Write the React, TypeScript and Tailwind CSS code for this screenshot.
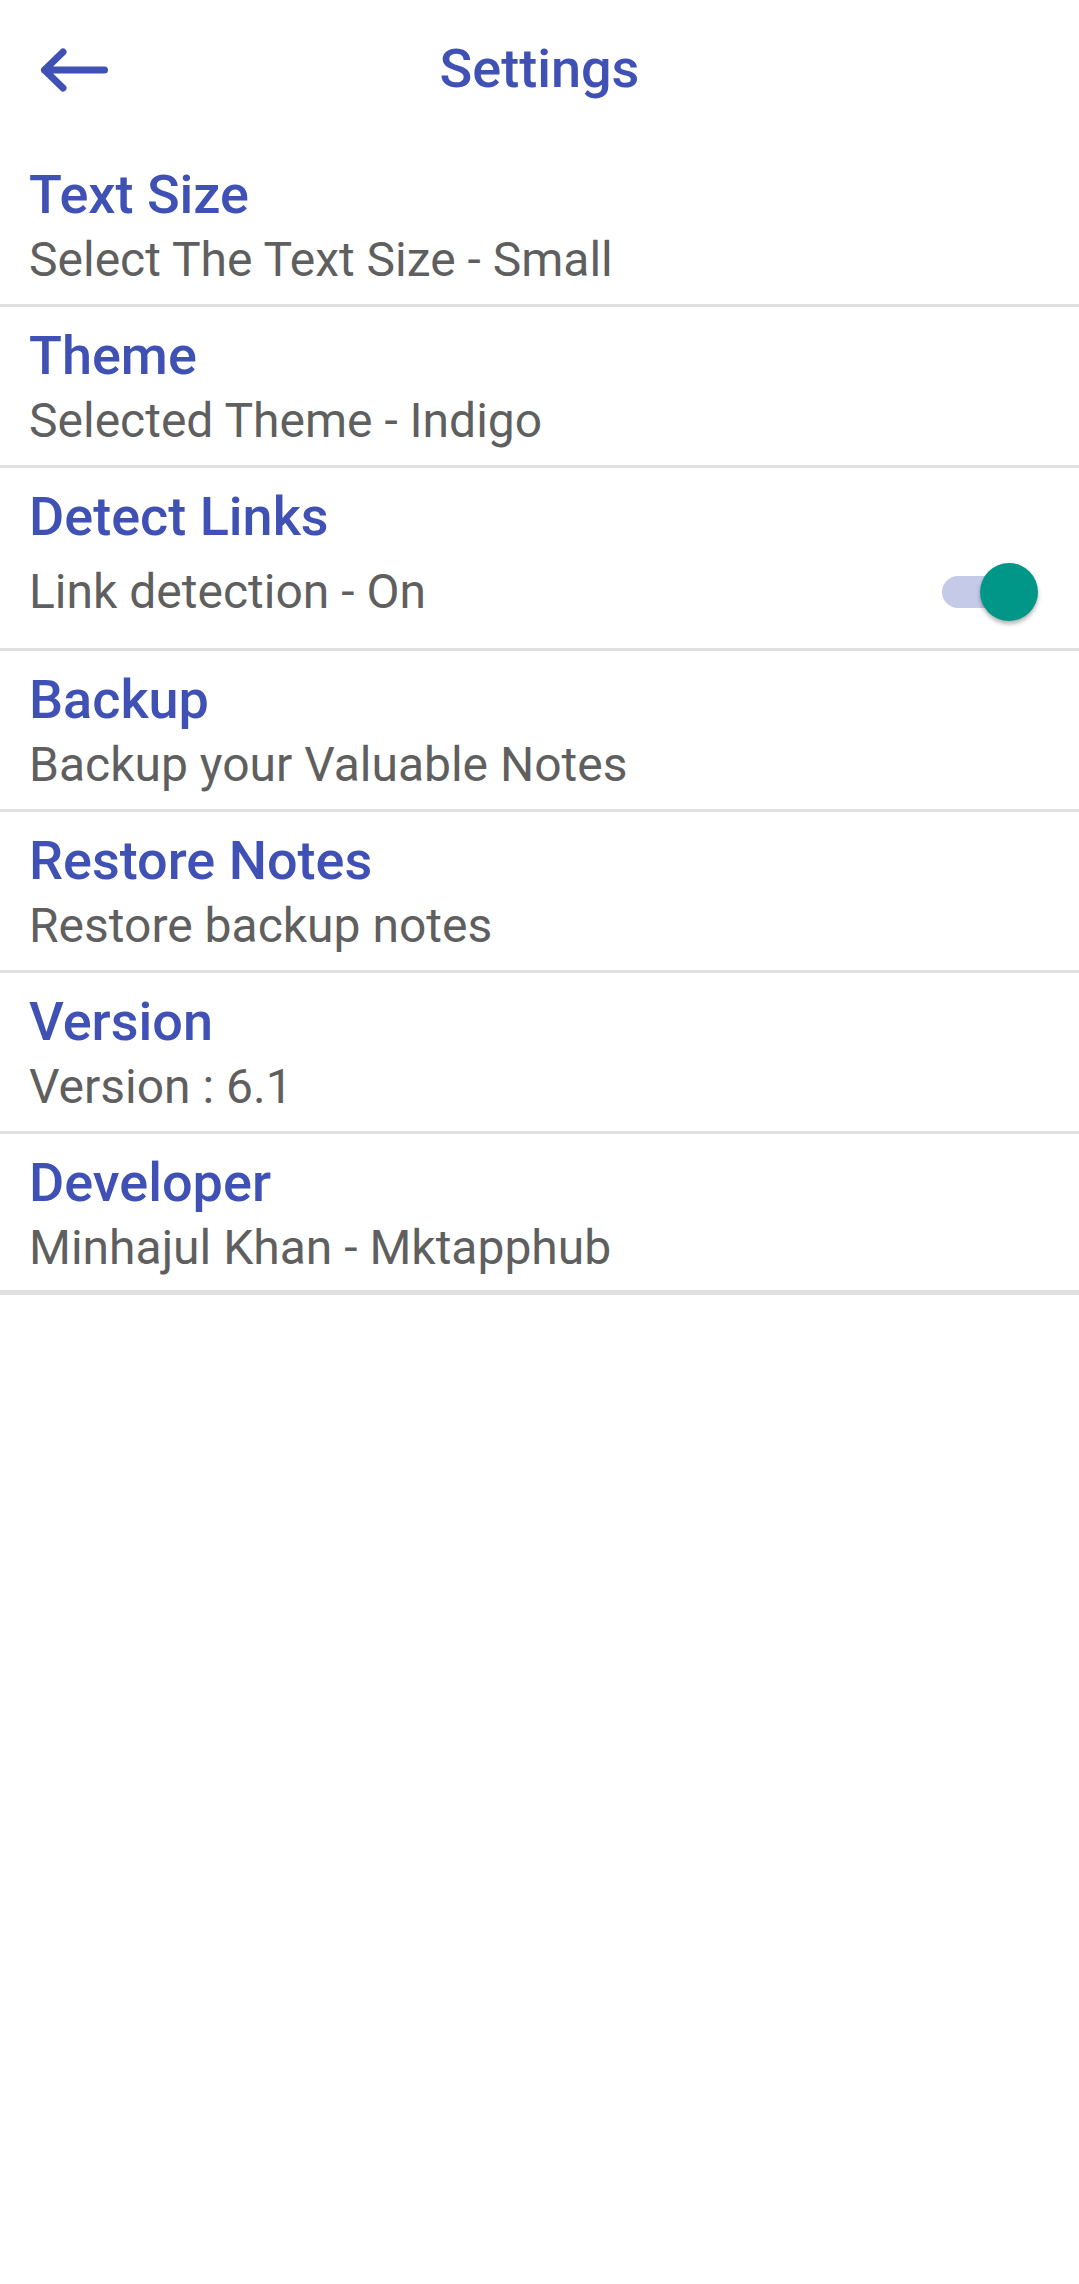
import { useState } from "react";

type Row = { title: string; subtitle: string; toggle?: boolean };

const rows: Row[] = [
  { title: "Text Size", subtitle: "Select The Text Size - Small" },
  { title: "Theme", subtitle: "Selected Theme - Indigo" },
  { title: "Detect Links", subtitle: "Link detection - On", toggle: true },
  { title: "Backup", subtitle: "Backup your Valuable Notes" },
  { title: "Restore Notes", subtitle: "Restore backup notes" },
  { title: "Version", subtitle: "Version : 6.1" },
  { title: "Developer", subtitle: "Minhajul Khan - Mktapphub" },
];

function BackArrow() {
  return (
    <svg width="80" height="50" viewBox="0 0 80 50" fill="none">
      <path
        d="M8.5 25 L68.5 25 M27 7 L8.5 25 L27 43"
        stroke="#3f51b5"
        strokeWidth="7"
        strokeLinecap="round"
        strokeLinejoin="round"
      />
    </svg>
  );
}

function Toggle({ on, onChange }: { on: boolean; onChange: () => void }) {
  return (
    <button
      type="button"
      onClick={onChange}
      className="relative w-[96px] h-[62px] mr-[41px] shrink-0"
    >
      <span
        className={`absolute left-0 top-[15px] w-[90px] h-[32px] rounded-full ${
          on ? "bg-[#c5cae9]" : "bg-[#bdbdbd]"
        }`}
      />
      <span
        className={`absolute top-[2px] w-[58px] h-[58px] rounded-full shadow-[0_3px_4px_rgba(0,0,0,0.3)] ${
          on ? "right-0 bg-[#009688]" : "left-0 bg-[#f5f5f5]"
        }`}
      />
    </button>
  );
}

export default function App() {
  const [links, setLinks] = useState(true);

  return (
    <div
      className="w-[1079px] min-h-[2284px] bg-white"
      style={{ fontFamily: "Roboto, 'Noto Sans', sans-serif" }}
    >
      <header className="grid grid-cols-[1fr_auto_1fr] h-[146px] pt-[37px]">
        <div className="ml-[36px] mt-[8px]">
          <BackArrow />
        </div>
        <h1 className="text-[54px] leading-[64px] font-medium text-[#3f51b5]">
          Settings
        </h1>
        <div />
      </header>

      {rows.map((row, i) => (
        <div
          key={row.title}
          className={`pl-[29px] ${
            i === rows.length - 1
              ? "border-b-[5px] border-[#e0e0e0]"
              : "border-b-[3px] border-[#e0e0e0]"
          } ${row.toggle ? "h-[183px]" : "h-[161px]"}`}
        >
          <div className="pt-[17px] text-[54px] leading-[64px] font-medium text-[#3f51b5]">
            {row.title}
          </div>
          {row.toggle ? (
            <div className="flex items-center justify-between h-[86px]">
              <span className="text-[48px] leading-[56px] text-[#5f5f5f]">
                {links ? "Link detection - On" : "Link detection - Off"}
              </span>
              <Toggle on={links} onChange={() => setLinks(!links)} />
            </div>
          ) : (
            <div className="mt-[5px] text-[48px] leading-[56px] text-[#5f5f5f]">
              {row.subtitle}
            </div>
          )}
        </div>
      ))}
    </div>
  );
}
